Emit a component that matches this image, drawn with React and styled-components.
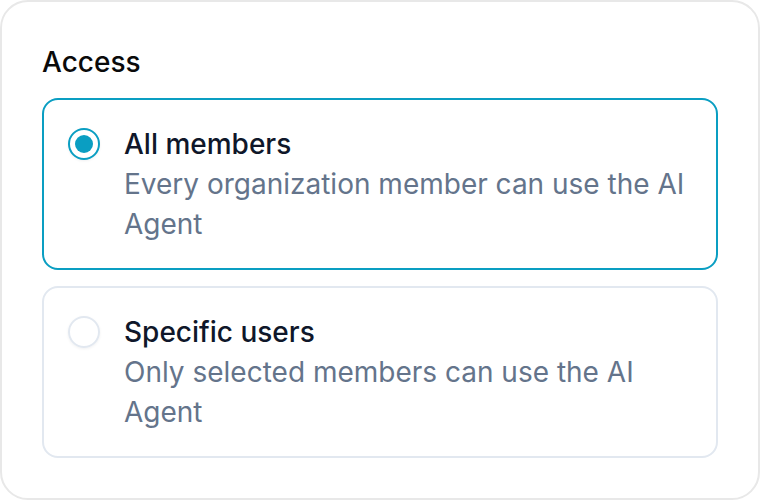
import React, { useState } from 'react';
import styled, { createGlobalStyle } from 'styled-components';

const GlobalStyle = createGlobalStyle`
  html, body {
    margin: 0;
    padding: 0;
    background: #ffffff;
  }
  body {
    font-family: Inter, "Noto Sans", sans-serif;
    -webkit-font-smoothing: antialiased;
  }
`;

const Card = styled.div`
  box-sizing: border-box;
  width: 760px;
  height: 500px;
  border: 2px solid #e8e8e8;
  border-radius: 28px;
  background: #ffffff;
  padding: 40px;
  display: flex;
  flex-direction: column;
`;

const Label = styled.div`
  font-size: 28px;
  line-height: 40px;
  font-weight: 500;
  color: #0a0a0a;
  margin-bottom: 16px;
`;

const Options = styled.div`
  display: flex;
  flex-direction: column;
  gap: 16px;
`;

const Option = styled.label`
  box-sizing: border-box;
  display: flex;
  align-items: flex-start;
  gap: 24px;
  padding: 24px;
  border: 2px solid ${(p) => (p.$active ? '#0a9ec2' : '#e2e8f0')};
  border-radius: 16px;
  cursor: pointer;
`;

const Radio = styled.span`
  box-sizing: border-box;
  flex: none;
  width: 32px;
  height: 32px;
  margin-top: 4px;
  border-radius: 50%;
  border: 2px solid ${(p) => (p.$active ? '#0a9ec2' : '#e2e8f0')};
  box-shadow: 0 1px 3px rgba(15, 23, 42, 0.06);
  display: flex;
  align-items: center;
  justify-content: center;

  &::after {
    content: '';
    display: ${(p) => (p.$active ? 'block' : 'none')};
    width: 18px;
    height: 18px;
    border-radius: 50%;
    background: #0a9ec2;
  }
`;

const Text = styled.div`
  display: flex;
  flex-direction: column;
`;

const Title = styled.div`
  font-size: 28px;
  line-height: 40px;
  font-weight: 500;
  color: #0f172a;
`;

const Description = styled.div`
  font-size: 28px;
  line-height: 40px;
  font-weight: 400;
  color: #64748b;
`;

const options = [
  { id: 'all', title: 'All members', desc: 'Every organization member can use the AI Agent' },
  { id: 'specific', title: 'Specific users', desc: 'Only selected members can use the AI Agent' },
];

export default function App() {
  const [value, setValue] = useState('all');
  return (
    <>
      <GlobalStyle />
      <Card>
        <Label>Access</Label>
        <Options>
          {options.map((o) => (
            <Option key={o.id} $active={value === o.id} onClick={() => setValue(o.id)}>
              <Radio $active={value === o.id} />
              <Text>
                <Title>{o.title}</Title>
                <Description>{o.desc}</Description>
              </Text>
            </Option>
          ))}
        </Options>
      </Card>
    </>
  );
}
